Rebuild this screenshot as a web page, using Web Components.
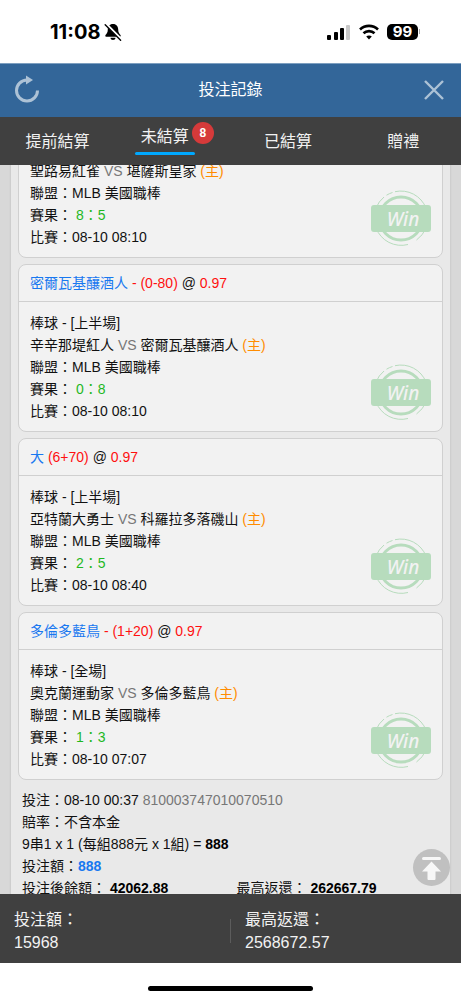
<!DOCTYPE html>
<html lang="zh-Hant">
<head>
<meta charset="utf-8">
<meta name="viewport" content="width=device-width, initial-scale=1">
<title>投注記錄</title>
<style>
  :root {
    --color-header: #336699;
    --color-bar: #404040;
    --color-line: #d0d0d0;
    --color-link: #1878f0;
    --color-odds: #ff1010;
    --color-score: #1fb81f;
    --color-home: #ff8c00;
    --color-muted: #777;
    --color-stamp: #b7dcbd;
  }
  body {
    margin: 0;
    font: 14px/22px "Liberation Sans", "Noto Sans CJK TC", sans-serif;
    color: #111;
  }
</style>
</head>
<body>
<bet-app></bet-app>

<script>
class StatusBar extends HTMLElement {
  constructor() {
    super();
    this.attachShadow({ mode: "open" });
    this.render();
  }

  render() {
    this.shadowRoot.innerHTML = `
      <style>
        :host {
          display: flex;
          justify-content: space-between;
          align-items: center;
          height: 63px;
          padding: 0 41px 0 50px;
          background: #fff;
          color: #000;
          font-family: Inter, sans-serif;
          font-weight: 700;
          box-sizing: border-box;
        }
        .side { display: flex; align-items: center; }
        .left { gap: 4px; font-size: 20px; }
        .right { gap: 8px; }
        .battery { display: flex; align-items: center; gap: 1px; }
        .level {
          width: 31px;
          height: 16px;
          border-radius: 5px;
          background: #000;
          color: #fff;
          font-size: 15px;
          line-height: 16px;
          text-align: center;
        }
        .tip { width: 1px; height: 5px; background: #aaa; }
        svg { display: block; }
      </style>
      <div class="side left">
        <span>11:08</span>
        <svg width="18" height="18" viewBox="0 0 18 18" aria-hidden="true">
          <path d="M9 1C5.500 1 3.800 3.500 3.800 6.500 3.800 9.500 2.800 10.500 1.500 12q-1 1.800 .8 1.800h13.400q1.800 0 .8-1.800c-1.300-1.500-2.300-2.500-2.300-5.500C14.200 3.500 12.500 1 9 1z M6.500 14.800h5c0 3-5 3-5 0z"/>
          <path d="M2.500 1.500l15 15" stroke="#fff" stroke-width="2.600"/>
          <path d="M1.200 1.800l15.400 15.400" stroke="#000" stroke-width="1.400" stroke-linecap="round"/>
        </svg>
      </div>
      <div class="side right">
        <svg width="24" height="16" viewBox="0 0 24 16" aria-hidden="true">
          <rect x="0" y="11" width="4" height="5" rx="1"/>
          <rect x="7" y="8" width="4" height="8" rx="1"/>
          <rect x="13" y="4" width="4" height="12" rx="1"/>
          <rect x="19" y="1" width="4" height="15" rx="1" fill="#c8c8c8"/>
        </svg>
        <svg width="20" height="16" viewBox="0 0 20 16" fill="none" stroke="#000" stroke-width="2.600" aria-hidden="true">
          <path d="M1 5.500C6 .700 14 .700 19 5.500"/>
          <path d="M4.500 9.300c3-2.900 8-2.900 11 0"/>
          <path d="M10 15.500l-2.800-3c1.600-1.500 4-1.500 5.600 0z" fill="#000" stroke="none"/>
        </svg>
        <div class="battery"><span class="level">99</span><span class="tip"></span></div>
      </div>
    `;
  }
}
customElements.define("status-bar", StatusBar);

class PageHeader extends HTMLElement {
  constructor() {
    super();
    this.attachShadow({ mode: "open" });
    this.render();
  }

  render() {
    this.shadowRoot.innerHTML = `
      <style>
        :host {
          display: flex;
          align-items: center;
          justify-content: space-between;
          height: 54px;
          padding: 0 14px 2px;
          background: var(--color-header);
          border-top: 1px solid #7d9fc0;
          box-sizing: border-box;
          color: #fff;
        }
        h1 { margin: 0; font-size: 16px; font-weight: 400; }
        button {
          width: 26px;
          height: 30px;
          padding: 0;
          border: 0;
          background: none;
          color: #adc2d6;
          cursor: pointer;
        }
        svg { display: block; }
      </style>
      <button type="button" aria-label="重新整理">
        <svg width="26" height="30" viewBox="0 0 26 30" fill="none" aria-hidden="true">
          <path d="M23.500 15.500A10.500 10.500 0 1 1 13 5" stroke="currentColor" stroke-width="3"/>
          <path d="M12 .500l7 4.500-7 4.500z" fill="currentColor"/>
        </svg>
      </button>
      <h1><slot></slot></h1>
      <button type="button" aria-label="關閉">
        <svg width="26" height="30" viewBox="0 0 26 30" aria-hidden="true">
          <path d="M4 6l18 18M22 6L4 24" stroke="currentColor" stroke-width="2.400"/>
        </svg>
      </button>
    `;
  }
}
customElements.define("page-header", PageHeader);

class BetTabs extends HTMLElement {
  constructor() {
    super();
    this.attachShadow({ mode: "open" });
    this.render();
  }

  render() {
    this.shadowRoot.innerHTML = `
      <style>
        :host {
          display: flex;
          height: 48px;
          background: var(--color-bar);
        }
        button {
          flex: 1;
          display: flex;
          align-items: center;
          justify-content: center;
          padding: 2px 0 0;
          border: 0;
          background: none;
          color: #f2f2f2;
          font: inherit;
          font-size: 16px;
          cursor: pointer;
        }
        .label {
          padding: 0 6px;
          line-height: 30px;
        }
        [aria-selected="true"] { padding: 0 0 5px; }
        .label::after {
          content: "";
          display: block;
          height: 0;
          margin: 0 -6px;
          border-radius: 2px;
          background: #00a8ff;
        }
        [aria-selected="true"] .label::after { height: 3px; }
        .badge {
          align-self: flex-start;
          width: 22px;
          height: 22px;
          margin: 5px -3px 0;
          border-radius: 50%;
          background: #d63a3a;
          color: #fff;
          font-size: 12px;
          font-weight: 700;
          line-height: 22px;
        }
      </style>
      <button type="button" role="tab" aria-selected="false"><span class="label">提前結算</span></button>
      <button type="button" role="tab" aria-selected="true"><span class="label">未結算</span><span class="badge">8</span></button>
      <button type="button" role="tab" aria-selected="false"><span class="label">已結算</span></button>
      <button type="button" role="tab" aria-selected="false"><span class="label">贈禮</span></button>
    `;
  }

  connectedCallback() {
    this.setAttribute("role", "tablist");
    const tabs = this.shadowRoot.querySelectorAll("button");
    tabs.forEach((tab) => {
      tab.addEventListener("click", () => {
        tabs.forEach((t) => t.setAttribute("aria-selected", String(t === tab)));
      });
    });
  }
}
customElements.define("bet-tabs", BetTabs);

class WinStamp extends HTMLElement {
  constructor() {
    super();
    this.attachShadow({ mode: "open" });
    this.render();
  }

  render() {
    this.shadowRoot.innerHTML = `
      <style>
        :host { display: block; }
        svg { display: block; }
        text {
          font: italic 500 19px "Noto Sans", "Open Sans", sans-serif;
          fill: #f2f2f2;
        }
      </style>
      <svg width="60" height="60" viewBox="0 0 60 60" fill="none" stroke="var(--color-stamp)">
        <circle cx="30" cy="30.500" r="21.500" stroke-width="3"/>
        <path d="M24 3.700A27 27 0 0 1 55 20" stroke-width="1"/>
        <path d="M15.500 7.200A27 27 0 0 1 21.500 4.500" stroke-width="1"/>
        <path d="M5 20A27 27 0 0 1 13 9" stroke-width="1"/>
        <path d="M5 40A27 27 0 0 0 37 56.500" stroke-width="1"/>
        <path d="M45.500 52A27 27 0 0 0 55 40" stroke-width="1"/>
        <rect x="0" y="17" width="60" height="27" rx="3" fill="var(--color-stamp)" stroke="none"/>
        <text x="32" y="38" text-anchor="middle" stroke="none">Win</text>
      </svg>
    `;
  }
}
customElements.define("win-stamp", WinStamp);

class BetCard extends HTMLElement {
  constructor() {
    super();
    this.attachShadow({ mode: "open" });
  }

  connectedCallback() {
    this.render();
  }

  render() {
    const { pick, line, odds, period, away, home, score, date } = this.dataset;
    this.shadowRoot.innerHTML = `
      <style>
        :host {
          display: block;
          border: 1px solid var(--color-line);
          border-radius: 8px;
          background: #f2f2f2;
        }
        h2 {
          margin: 0;
          padding: 7px 11px;
          border-bottom: 1px solid var(--color-line);
          font-size: 14px;
          font-weight: 400;
        }
        .pick { color: var(--color-link); }
        .odds { color: var(--color-odds); }
        .body {
          display: flex;
          align-items: flex-end;
          justify-content: space-between;
          padding: 10px 11px 9px;
        }
        .vs { color: var(--color-muted); }
        .home { color: var(--color-home); }
        .score { color: var(--color-score); }
      </style>
      ${pick ? `<h2><span class="pick">${pick}</span> <span class="odds">${line}</span> @ <span class="odds">${odds}</span></h2>` : ""}
      <div class="body">
        <div>
          ${period ? `<div>棒球 - [${period}]</div>` : ""}
          <div>${away} <span class="vs">VS</span> ${home} <span class="home">(主)</span></div>
          <div>聯盟：MLB 美國職棒</div>
          <div>賽果： <span class="score">${score}</span></div>
          <div>比賽：${date}</div>
        </div>
        <win-stamp></win-stamp>
      </div>
    `;
  }
}
customElements.define("bet-card", BetCard);

class BetSummary extends HTMLElement {
  constructor() {
    super();
    this.attachShadow({ mode: "open" });
    this.render();
  }

  render() {
    this.shadowRoot.innerHTML = `
      <style>
        :host { display: block; padding: 3px 0 6px 4px; }
        .id { color: var(--color-muted); }
        .stake { color: var(--color-link); }
        .row {
          display: grid;
          grid-template-columns: 1fr 1fr;
          column-gap: 8px;
        }
        b { color: #000; }
      </style>
      <div>投注：08-10 00:37 <span class="id">810003747010070510</span></div>
      <div>賠率：不含本金</div>
      <div>9串1 x 1 (每組888元 x 1組) = <b>888</b></div>
      <div>投注額：<b class="stake">888</b></div>
      <div class="row">
        <div>投注後餘額： <b>42062.88</b></div>
        <div>最高返還： <b>262667.79</b></div>
      </div>
    `;
  }
}
customElements.define("bet-summary", BetSummary);

class TotalBar extends HTMLElement {
  constructor() {
    super();
    this.attachShadow({ mode: "open" });
    this.render();
  }

  render() {
    this.shadowRoot.innerHTML = `
      <style>
        :host {
          display: flex;
          align-items: center;
          padding: 14px 0 9px;
          background: var(--color-bar);
          color: #f2f2f2;
          font-size: 16px;
          line-height: 23px;
        }
        .total { flex: 1; padding-left: 14px; }
        .divider { width: 1px; height: 24px; background: #5c5c5c; }
      </style>
      <div class="total"><div>投注額：</div><div>15968</div></div>
      <div class="divider"></div>
      <div class="total"><div>最高返還：</div><div>2568672.57</div></div>
    `;
  }
}
customElements.define("total-bar", TotalBar);

class BetApp extends HTMLElement {
  constructor() {
    super();
    this.attachShadow({ mode: "open" });
    this.render();
  }

  render() {
    this.shadowRoot.innerHTML = `
      <style>
        :host {
          display: flex;
          flex-direction: column;
          height: 100vh;
          background: #fff;
        }
        main {
          flex: 1;
          min-height: 0;
          position: relative;
          display: flex;
          background: #d8d8d8;
        }
        .scroll {
          flex: 1;
          overflow-y: auto;
          scrollbar-width: none;
        }
        .panel {
          display: flex;
          flex-direction: column;
          gap: 6px;
          margin: 0 11px;
          padding: 5px 7px 0;
          background: #e9e9e9;
          box-shadow: 0 0 2px #bbb;
        }
        /* floats over the list */
        .to-top {
          position: absolute;
          right: 11px;
          bottom: 8px;
          width: 37px;
          height: 37px;
          padding: 0;
          border: 0;
          border-radius: 50%;
          background: #c0c0c0;
          cursor: pointer;
        }
        .to-top svg { display: block; }
        .home {
          display: flex;
          justify-content: center;
          padding: 23px 0 9px;
        }
        .home span { width: 165px; height: 5px; border-radius: 3px; background: #000; }
      </style>
      <status-bar></status-bar>
      <page-header>投注記錄</page-header>
      <bet-tabs></bet-tabs>
      <main>
        <div class="scroll">
          <div class="panel">
            <bet-card data-away="聖路易紅雀" data-home="堪薩斯皇家" data-score="8：5" data-date="08-10 08:10"></bet-card>
            <bet-card data-pick="密爾瓦基釀酒人" data-line="- (0-80)" data-odds="0.97" data-period="上半場"
              data-away="辛辛那堤紅人" data-home="密爾瓦基釀酒人" data-score="0：8" data-date="08-10 08:10"></bet-card>
            <bet-card data-pick="大" data-line="(6+70)" data-odds="0.97" data-period="上半場"
              data-away="亞特蘭大勇士" data-home="科羅拉多落磯山" data-score="2：5" data-date="08-10 08:40"></bet-card>
            <bet-card data-pick="多倫多藍鳥" data-line="- (1+20)" data-odds="0.97" data-period="全場"
              data-away="奧克蘭運動家" data-home="多倫多藍鳥" data-score="1：3" data-date="08-10 07:07"></bet-card>
            <bet-summary></bet-summary>
          </div>
        </div>
        <button class="to-top" type="button" aria-label="回到頂部">
          <svg width="37" height="37" viewBox="0 0 37 37" fill="#f7f7f7" aria-hidden="true">
            <rect x="9" y="8" width="19" height="3" rx="1.500"/>
            <path d="M18.500 12.500L28 22.500h-5.500V30q0 1-1 1h-6q-1 0-1-1v-7.500H9z"/>
          </svg>
        </button>
      </main>
      <total-bar></total-bar>
      <div class="home"><span></span></div>
    `;
  }

  connectedCallback() {
    const list = this.shadowRoot.querySelector(".scroll");
    // open the list part-way through the first card
    list.scrollTop = 21;
    this.shadowRoot.querySelector(".to-top").addEventListener("click", () => {
      list.scrollTo({ top: 0, behavior: "smooth" });
    });
  }
}
customElements.define("bet-app", BetApp);
</script>
</body>
</html>
